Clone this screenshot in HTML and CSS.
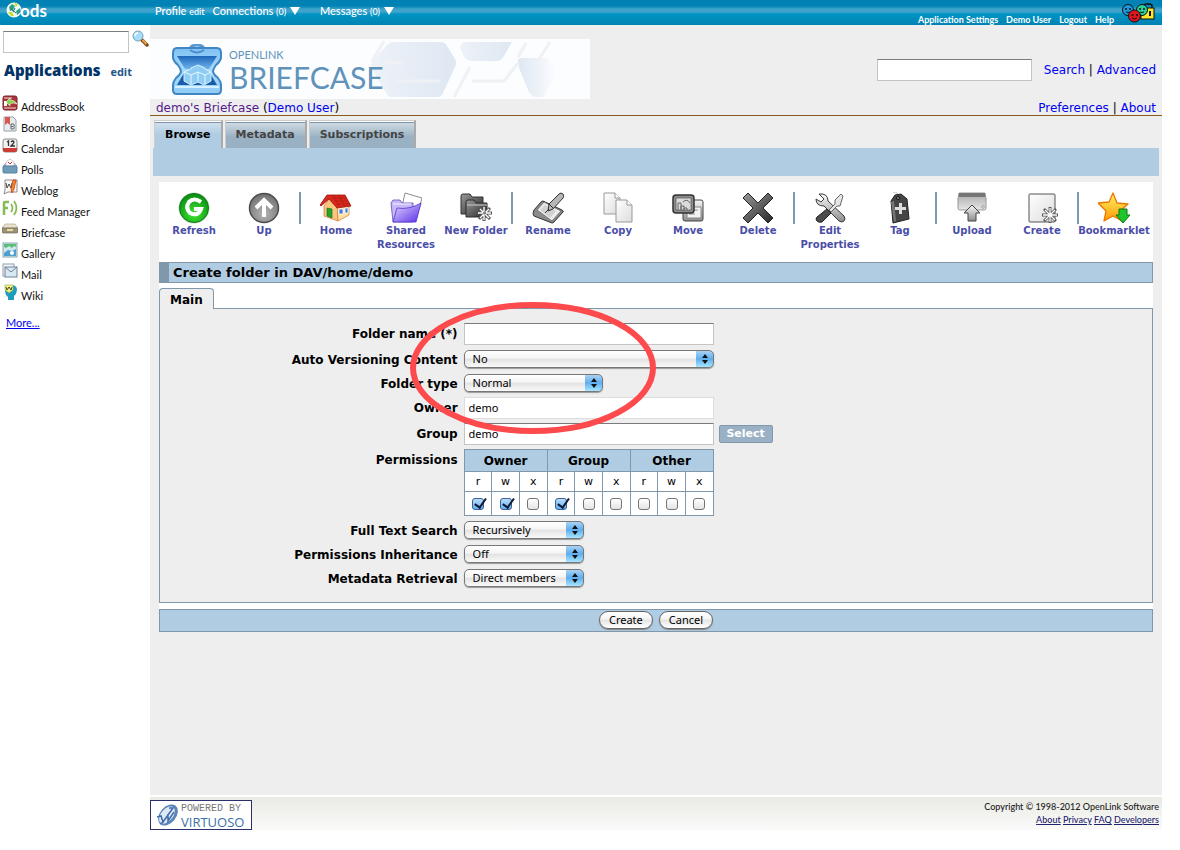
FILE: index.html
```html
<!DOCTYPE html>
<html lang="en">
<head>
    <meta charset="UTF-8">
    <meta name="viewport" content="width=device-width, initial-scale=1.0">
    <title>ODS Briefcase</title>
    <link rel="stylesheet" href="styles.css">
</head>
<body>
    <!-- shared gradients for the icons -->
    <svg class="defs" width="0" height="0" aria-hidden="true">
        <defs>
            <linearGradient id="gray" x1="0" y1="0" x2="0" y2="1"><stop offset="0" stop-color="#f8f8f8"/><stop offset="1" stop-color="#8d8d8d"/></linearGradient>
            <linearGradient id="drive" x1="0" y1="0" x2="0" y2="1"><stop offset="0" stop-color="#a8a8a8"/><stop offset="1" stop-color="#e6e6e6"/></linearGradient>
            <linearGradient id="dark" x1="0" y1="0" x2="1" y2="1"><stop offset="0" stop-color="#9a9a9a"/><stop offset="1" stop-color="#262626"/></linearGradient>
            <linearGradient id="paper" x1="0" y1="0" x2="1" y2="1"><stop offset="0" stop-color="#ffffff"/><stop offset="1" stop-color="#dcdcdc"/></linearGradient>
            <radialGradient id="green" cx="0.5" cy="0.7" r="0.7"><stop offset="0" stop-color="#3fe62f"/><stop offset="1" stop-color="#088a12"/></radialGradient>
            <radialGradient id="up" cx="0.5" cy="0.7" r="0.7"><stop offset="0" stop-color="#b4b4b4"/><stop offset="1" stop-color="#707070"/></radialGradient>
            <linearGradient id="violet" x1="0" y1="0" x2="1" y2="1"><stop offset="0" stop-color="#e6dcff"/><stop offset="1" stop-color="#5a2ee6"/></linearGradient>
            <linearGradient id="gold" x1="0" y1="0" x2="0" y2="1"><stop offset="0" stop-color="#fff36a"/><stop offset="1" stop-color="#ff9a00"/></linearGradient>
            <linearGradient id="case" x1="0" y1="0" x2="0" y2="1"><stop offset="0" stop-color="#7fc0f3"/><stop offset="0.5" stop-color="#a9dcfb"/><stop offset="1" stop-color="#8fcbf6"/></linearGradient>
            <linearGradient id="inside" x1="0" y1="0" x2="0" y2="1"><stop offset="0" stop-color="#1d66b8"/><stop offset="1" stop-color="#6fb4ee"/></linearGradient>
            <linearGradient id="cell" x1="0" y1="0" x2="1" y2="0"><stop offset="0" stop-color="#eef2f8"/><stop offset="1" stop-color="#dee7f2"/></linearGradient>
            <linearGradient id="cellfade" x1="0" y1="0" x2="1" y2="0"><stop offset="0" stop-color="#dee7f2"/><stop offset="1" stop-color="#fcfdfe"/></linearGradient>
        </defs>
    </svg>

    <header class="topbar">
        <a href="#" class="ods" aria-label="ods">
            <svg width="16" height="18" viewBox="0 0 16 18">
                <circle cx="8" cy="8" r="7.500" fill="#f2faf4"/>
                <path d="M3 5l3-3 3 2-2 4-3 1zM10 9l4-3 1 4-4 3z" fill="#2f9f8c"/>
                <path d="M8 1l4 1-2 3zM2 10l4 0 2 4-3 0z" fill="#c6dc28"/>
                <path d="M5 7l5 4M9 6l-2 4" stroke="#146c7c" stroke-width="1"/>
            </svg>
            <span>ods</span>
        </a>
        <nav class="menu">
            <span><a href="#">Profile</a> <a href="#" class="small">edit</a></span>
            <a href="#">Connections <span class="small">(0)</span> <i class="down"></i></a>
            <a href="#" class="messages">Messages <span class="small">(0)</span> <i class="down"></i></a>
        </nav>
        <nav class="account">
            <a href="#">Application Settings</a>
            <a href="#">Demo User</a>
            <a href="#">Logout</a>
            <a href="#">Help</a>
        </nav>
        <svg class="faces" width="33" height="20" viewBox="0 0 33 20">
            <path d="M22 8V3q0-2 3-2h2q3 0 3 2v5" fill="none" stroke="#111" stroke-width="1.500"/>
            <rect x="19" y="5" width="13" height="11" fill="#ffe62b" stroke="#111"/>
            <path d="M28 8v5" stroke="#111" stroke-width="2"/>
            <circle cx="6" cy="7" r="5.500" fill="#1b9ade" stroke="#111"/>
            <circle cx="20" cy="7" r="5.500" fill="#27d39c" stroke="#111"/>
            <circle cx="12.500" cy="13" r="6" fill="#e0161c" stroke="#111"/>
            <path d="M3 6h2M7 6h2M17 6h2M21 6h2M9.500 12h2M14 12h2" stroke="#111" stroke-width="1.500"/>
            <path d="M4 9q2 1 4 0M18 9q2 1 4 0M10 15q2.500 2 5 0" fill="none" stroke="#111"/>
        </svg>
    </header>

    <div class="page">
        <aside class="sidebar">
            <form class="find">
                <input type="text" class="field" aria-label="Search">
                <button type="button" aria-label="Find">
                    <svg width="17" height="17" viewBox="0 0 17 17">
                        <path d="M10 10l5 5" stroke="#7a4a1e" stroke-width="3.500" stroke-linecap="round"/>
                        <path d="M10.500 10l4 4" stroke="#f2a540" stroke-width="2"/>
                        <circle cx="6" cy="6" r="5" fill="#a5ddfa" stroke="#7c9cb8"/>
                        <path d="M3 6q0-3 3-3" fill="none" stroke="#fff" stroke-width="1.500"/>
                    </svg>
                </button>
            </form>
            <h2>Applications <a href="#">edit</a></h2>
            <ul class="apps">
                <li><a href="#"><svg width="16" height="16" viewBox="0 0 16 16"><rect x="1" y="1" width="14" height="14" rx="2" fill="#a8343a" stroke="#7b2227"/><path d="M2 3h8M2 13h12" stroke="#f0dcdc"/><rect x="2" y="6" width="3" height="5" fill="#fff"/><path d="M4 7l4-4v2q5 0 7 4-4-2-7 0v2z" fill="#8bd24c" stroke="#f2ffe8" stroke-width=".6"/></svg>AddressBook</a></li>
                <li><a href="#"><svg width="16" height="16" viewBox="0 0 16 16"><path d="M2 1h9l3 3v11H2z" fill="#e8ecef" stroke="#97a2ab"/><path d="M3 1h5v8L5.500 7 3 9z" fill="#d8594f"/><path d="M9 8v5h2q2 0 1-2.500 1-2.500-1-2.500zM9 10.500h2" fill="none" stroke="#5b6670"/></svg>Bookmarks</a></li>
                <li><a href="#"><svg width="16" height="16" viewBox="0 0 16 16"><rect x="1" y="2" width="14" height="13" rx="2" fill="#f1f1f1" stroke="#8b8b8b"/><path d="M1 11h14v2q0 2-2 2H3q-2 0-2-2z" fill="#cf3b35"/><path d="M5 5l1.500-1v5M9 5q2-2 3 0 0 1-3 4h4" fill="none" stroke="#333" stroke-width="1.300"/></svg>Calendar</a></li>
                <li><a href="#"><svg width="16" height="16" viewBox="0 0 16 16"><path d="M1 8l3-3h8l3 3z" fill="#b9cfdd" stroke="#7292a6" stroke-width=".6"/><path d="M4 8V4l4-3 4 3v4z" fill="#fff" stroke="#b9a0a5" stroke-width=".6"/><path d="M6 4l2 2 2-2" fill="none" stroke="#d6304f"/><rect x="1" y="8" width="14" height="7" rx="1" fill="#6f9cb8" stroke="#5481a0"/></svg>Polls</a></li>
                <li><a href="#"><svg width="16" height="16" viewBox="0 0 16 16"><path d="M3 1h12v12H6l-4 2 1-4z" fill="#f8f8f8" stroke="#8c8c8c"/><path d="M4 4l1 5 2-4 2 4 1-5" fill="none" stroke="#444"/><path d="M14 1l-2 9-2 4-1-4 2-9z" fill="#f08b22" stroke="#cf3b1c" stroke-width=".8"/></svg>Weblog</a></li>
                <li><a href="#"><svg width="16" height="16" viewBox="0 0 16 16"><path d="M2 15V3q0-1 1-1h4M2 8h4" fill="none" stroke="#84bd57" stroke-width="2.500"/><path d="M9 4q3 4 0 8M12 1q5 7 0 14" fill="none" stroke="#84bd57" stroke-width="1.800"/></svg>Feed Manager</a></li>
                <li><a href="#"><svg width="16" height="16" viewBox="0 0 16 16"><path d="M3 3h10l3 4H0z" fill="#e9e3cd" stroke="#b3aa8c" stroke-width=".7"/><path d="M0 7h16v4l-1 1H1l-1-1z" fill="#9c9478" stroke="#6d6650" stroke-width=".7"/><path d="M5 8h6v2H5z" fill="#e8dca0"/></svg>Briefcase</a></li>
                <li><a href="#"><svg width="16" height="16" viewBox="0 0 16 16"><rect x="1" y="1" width="14" height="14" fill="#cfe8ee" stroke="#8aaab3"/><path d="M2 2h12v3l-2-1-2 2-3-2-3 2-2-1z" fill="#5bbd76"/><path d="M2 11l4-3 4 1 4-2v7H2z" fill="#4c9fd0"/><circle cx="10" cy="11" r="2" fill="#fff"/></svg>Gallery</a></li>
                <li><a href="#"><svg width="16" height="16" viewBox="0 0 16 16"><rect x="1" y="1" width="11" height="12" fill="#f4f6f8" stroke="#8e9dad"/><rect x="3" y="4" width="12" height="10" fill="#d9e8f5" stroke="#6f8298"/><path d="M3 4l6 5 6-5" fill="none" stroke="#6f8298"/></svg>Mail</a></li>
                <li><a href="#"><svg width="16" height="16" viewBox="0 0 16 16"><path d="M3 6q0-5 6-5t6 5l-1 4-2 2v4H6v-3q-3-2-3-7z" fill="#1b9cc0"/><path d="M3 1h8v5l-4 3-4-3z" fill="#eef08a" stroke="#9faa33" stroke-width=".6"/><path d="M4 3l1 3 2-3 2 3 1-3" fill="none" stroke="#3d4d1c"/></svg>Wiki</a></li>
            </ul>
            <a href="#" class="more">More...</a>
        </aside>

        <div class="content">
            <main>
                <div class="banner">
                    <div class="brand">
                        <svg class="hex" width="230" height="60" viewBox="0 0 230 60" aria-hidden="true">
                            <path d="M34 3h46q5 0 7 4l8 13q2 4 0 8L83 54q-2 4-6 4H32q-4 0-6-4L12 30q-2-4 0-8L26 7q3-4 8-4z" fill="url(#cell)"/>
                            <path d="M100 8q2-5 6-5h46l-8 14q-3 5-8 5h-24q-5 0-8-4z" fill="url(#cell)"/>
                            <path d="M158 22q0-3 3-3h26l10 12-10 20-4 7h-6q-5 0-8-5l-10-24z" fill="url(#cellfade)"/>
                            <path d="M12 22l12-20M36 42h44M24 24h20M112 42h32l14-18M110 28l-16 30M190 3l-14 22M158 18l8-14" fill="none" stroke="#eff1f4" stroke-width="3"/>
                        </svg>
                        <svg class="case" width="50" height="51" viewBox="0 0 50 51" aria-hidden="true">
                            <path d="M18 5q1-4 7-4t7 4" fill="none" stroke="#5b99cf" stroke-width="3"/>
                            <path d="M5 4h40q4 0 4 5v5q-1 4-5 7-3 4-3 7 1 3 5 6 3 4 3 7v5q0 4-4 4H5q-4 0-4-4v-5q0-3 3-7 4-3 5-6 0-3-3-7-4-3-5-7V9q0-5 4-5z" fill="url(#case)" stroke="#3f86c5" stroke-width="2"/>
                            <path d="M18 6q7 5 14 0" fill="none" stroke="#4a8fcb" stroke-width="2"/>
                            <path d="M5 12h40l-8 13H13z" fill="url(#inside)"/>
                            <path d="M12 29h26l7 12H5z" fill="#1b5ca8"/>
                            <path d="M12 28l7-3 0-1 7-3 7 3v1l6 3v9l-7 4-6-3-7 3-7-4z" fill="#8fcdf5" stroke="#d9f1ff" stroke-width="1"/>
                            <path d="M12 28l7 3 7-3 7 3 6-3M19 31v9M26 28v9M33 31v9" fill="none" stroke="#e6f7ff"/>
                            <path d="M3 43h44" stroke="#d5f0ff" stroke-width="2"/>
                        </svg>
                        <div class="brand-name">
                            <span class="openlink">OPENLINK</span>
                            <span class="briefcase">BRIEFCASE</span>
                        </div>
                    </div>
                    <form class="search">
                        <input type="text" class="field" aria-label="Search briefcase">
                        <span><a href="#">Search</a> | <a href="#">Advanced</a></span>
                    </form>
                </div>
                <div class="crumbs">
                    <span><a href="#" class="visited">demo's Briefcase</a> (<a href="#">Demo User</a>)</span>
                    <span><a href="#">Preferences</a> | <a href="#">About</a></span>
                </div>

                <nav class="tabs">
                    <a href="#" class="active">Browse</a>
                    <a href="#">Metadata</a>
                    <a href="#">Subscriptions</a>
                </nav>
                <div class="strip"></div>

                <div class="sheet">
                    <nav class="toolbar">
                        <a href="#"><svg width="32" height="32" viewBox="0 0 32 32"><circle cx="16" cy="16" r="15.500" fill="#c9d6c9"/><circle cx="16" cy="16" r="14.500" fill="url(#green)" stroke="#0a7a16"/><path d="M23 10q-7-5-12 0-4 6 1 11 8 4 11-4h-7" fill="none" stroke="#fff" stroke-width="4"/></svg>Refresh</a>
                        <a href="#"><svg width="32" height="32" viewBox="0 0 32 32"><circle cx="16" cy="16" r="14.500" fill="url(#up)" stroke="#4c4c4c" stroke-width="1.500"/><path d="M16 25V8M8 16l8-8 8 8" fill="none" stroke="#fff" stroke-width="4"/></svg>Up</a>
                        <i class="sep"></i>
                        <a href="#"><svg width="32" height="32" viewBox="0 0 32 32"><path d="M4 14l6-8 8 9v14L4 24z" fill="#fbc57f" stroke="#c87a33" stroke-width=".7"/><path d="M17 14h12v9l-11 6z" fill="#ffdfa2" stroke="#c87a33" stroke-width=".7"/><path d="M7 3h18l6 11-14 2-8-9-8 7-1-1z" fill="#d8271c" stroke="#951610" stroke-width=".8"/><path d="M12 6h14M14 9h14M16 12h14M13 3l7 12M19 3l6 12" stroke="#a81a12" stroke-width=".6"/><path d="M7 16l5 1v9l-5-2z" fill="#22a52c" stroke="#126a18" stroke-width=".6"/><path d="M19 17h4v5h-4zM25 16h3v5h-3z" fill="#3c7be0" stroke="#fff" stroke-width=".8"/></svg>Home</a>
                        <a href="#"><svg width="32" height="32" viewBox="0 0 32 32"><path d="M15 1l17 5-5 18-16-5z" fill="#fff" stroke="#8d8d8d"/><path d="M1 11l2-3h7l2 3h11v19H3z" fill="#c9b8f8" stroke="#5f4ac0" stroke-width=".8"/><path d="M7 16q12 2 24-5l-5 19H3z" fill="url(#violet)" stroke="#5032cf" stroke-width=".8"/><path d="M3 12h18" stroke="#f4f0ff"/></svg>Shared<br>Resources</a>
                        <a href="#"><svg width="32" height="32" viewBox="0 0 32 32"><path d="M1 4q0-2 2-2h7l2 3h11v17H1z" fill="url(#dark)" stroke="#333"/><path d="M6 10q0-2 2-2h6l2 3h11v14H6z" fill="url(#dark)" stroke="#2d2d2d"/><path d="M7 13h20" stroke="#c9c9c9"/><path d="M24 14v15M17 21h15M19 16l11 11M30 16L19 27" stroke="#555" stroke-width="3"/><path d="M24 15v13M18 21h13M20 17l9 9M29 17l-9 9" stroke="#fff" stroke-width="1.400"/><circle cx="24.500" cy="21" r="1.500" fill="#777"/></svg>New Folder</a>
                        <i class="sep"></i>
                        <a href="#"><svg width="32" height="32" viewBox="0 0 32 32"><path d="M2 18l7-8q1-1 2-1l19 9q2 1 1 2l-9 10q-1 1-2 1L2 24q-2-2 0-6z" fill="#8b8b8b" stroke="#333"/><path d="M5 18l7-8 17 9-9 10z" fill="#ececec" stroke="#666" stroke-width=".8"/><path d="M8 18l5-5 11 6-6 7z" fill="#d2d2d2"/><path d="M16 19l1-7L27 2q2-2 4 0t0 4L21 17z" fill="#b6b6b6" stroke="#333"/><path d="M17 12l4 4M13 21l4-4" stroke="#333"/></svg>Rename</a>
                        <a href="#"><svg width="32" height="32" viewBox="0 0 32 32"><path d="M2 1h11l5 5v16H2z" fill="url(#paper)" stroke="#999"/><path d="M13 1v5h5" fill="#fff" stroke="#999"/><path d="M14 8h11l5 5v17H14z" fill="url(#paper)" stroke="#999"/><path d="M25 8v5h5" fill="#fff" stroke="#999"/></svg>Copy</a>
                        <a href="#"><svg width="32" height="32" viewBox="0 0 32 32"><rect x="11" y="8" width="20" height="21" rx="2" fill="url(#gray)" stroke="#444"/><path d="M15 15h14v11H15z" fill="#f3f3f3" stroke="#888"/><path d="M17 18h9M17 22h6" stroke="#888"/><rect x="1" y="3" width="21" height="18" rx="3" fill="#8d8d8d" stroke="#333" stroke-width="1.500"/><rect x="4" y="6" width="15" height="12" fill="#dadada" stroke="#555" stroke-width=".7"/><path d="M6 18v-7h3v7M9 18v-4h3v4M12 18v-2h3v2M11 10q4-4 7 1" fill="none" stroke="#666"/></svg>Move</a>
                        <a href="#"><svg width="32" height="32" viewBox="0 0 32 32"><path d="M6 1l10 10L26 1l5 5-10 10 10 10-5 5-10-10L6 31l-5-5 10-10L1 6z" fill="url(#dark)" stroke="#222"/></svg>Delete</a>
                        <i class="sep"></i>
                        <a href="#"><svg width="32" height="32" viewBox="0 0 32 32"><path d="M5 2l5 5-3 3-5-3q0 7 8 7l15 15q3 2 5 0t0-5L14 9q0-8-9-7z" fill="url(#gray)" stroke="#3a3a3a"/><path d="M29 4l-2-2-6 6v4l-6 6 2 2 6-6h3z" fill="#e6e6e6" stroke="#444" stroke-width=".8"/><path d="M13 17l4 4-9 9q-3 1-5-1t0-4z" fill="#4d4d4d" stroke="#222"/></svg>Edit<br>Properties</a>
                        <a href="#"><svg width="32" height="32" viewBox="0 0 32 32"><path d="M9 0q6 0 5 5" fill="none" stroke="#bbb"/><path d="M7 9l4-6 6-1 6 5 2 20-16 4z" fill="#454545" stroke="#222"/><path d="M7 10l3 20 2-1-2-20z" fill="#777"/><circle cx="14" cy="6" r="1.500" fill="#999" stroke="#111"/><path d="M16.500 11v11M11 16.500h11" stroke="#ddd" stroke-width="3"/></svg>Tag</a>
                        <i class="sep"></i>
                        <a href="#"><svg width="32" height="32" viewBox="0 0 32 32"><path d="M3 1h26l1 5v10q0 2-2 2H4q-2 0-2-2V6z" fill="url(#drive)" stroke="#999"/><path d="M3 1h26v4H3z" fill="#767676"/><circle cx="27" cy="15" r="1.300" fill="#eee" stroke="#777" stroke-width=".6"/><path d="M16 13l8 8h-4v8h-8v-8H8z" fill="url(#gray)" stroke="#444"/></svg>Upload</a>
                        <a href="#"><svg width="32" height="32" viewBox="0 0 32 32"><rect x="3" y="2" width="26" height="28" rx="1" fill="url(#paper)" stroke="#555"/><path d="M24 15v16M16 23h16M18 17l12 12M30 17L18 29" stroke="#555" stroke-width="2.800"/><path d="M24 16v14M17 23h14M19 18l10 10M29 18L19 28" stroke="#fff" stroke-width="1.300"/></svg>Create</a>
                        <i class="sep"></i>
                        <a href="#"><svg width="32" height="32" viewBox="0 0 32 32"><path d="M15 1l4 10 11 1-8 7 2 10-9-5-9 5 2-10-8-8 11-1z" fill="url(#gold)" stroke="#e87800" stroke-width="1.300" stroke-linejoin="round"/><path d="M21 17h8v6h3l-7 8-7-8h3z" fill="#1fc52a" stroke="#08790f"/></svg>Bookmarklet</a>
                    </nav>

                    <h1>Create folder in DAV/home/demo</h1>

                    <div class="form-tabs"><a href="#">Main</a></div>
                    <form class="props" id="props">
                        <label for="name">Folder name (*)</label>
                        <div><input type="text" id="name" class="field"></div>

                        <label for="versioning">Auto Versioning Content</label>
                        <div><select id="versioning" class="wide"><option>No</option><option>Yes</option></select></div>

                        <label for="type">Folder type</label>
                        <div><select id="type" class="medium"><option>Normal</option></select></div>

                        <label for="owner">Owner</label>
                        <div><input type="text" id="owner" class="field readonly" value="demo" readonly></div>

                        <label for="group">Group</label>
                        <div><input type="text" id="group" class="field" value="demo"><button type="button" class="select">Select</button></div>

                        <span class="label">Permissions</span>
                        <div>
                            <table class="perms">
                                <thead>
                                    <tr><th colspan="3">Owner</th><th colspan="3">Group</th><th colspan="3">Other</th></tr>
                                </thead>
                                <tbody>
                                    <tr class="rwx"><td>r</td><td>w</td><td>x</td><td>r</td><td>w</td><td>x</td><td>r</td><td>w</td><td>x</td></tr>
                                    <tr class="boxes">
                                        <td><input type="checkbox" aria-label="Owner r" checked></td>
                                        <td><input type="checkbox" aria-label="Owner w" checked></td>
                                        <td><input type="checkbox" aria-label="Owner x"></td>
                                        <td><input type="checkbox" aria-label="Group r" checked></td>
                                        <td><input type="checkbox" aria-label="Group w"></td>
                                        <td><input type="checkbox" aria-label="Group x"></td>
                                        <td><input type="checkbox" aria-label="Other r"></td>
                                        <td><input type="checkbox" aria-label="Other w"></td>
                                        <td><input type="checkbox" aria-label="Other x"></td>
                                    </tr>
                                </tbody>
                            </table>
                        </div>

                        <label for="fulltext">Full Text Search</label>
                        <div><select id="fulltext"><option>Recursively</option></select></div>

                        <label for="inherit">Permissions Inheritance</label>
                        <div><select id="inherit"><option>Off</option></select></div>

                        <label for="metadata">Metadata Retrieval</label>
                        <div><select id="metadata"><option>Direct members</option></select></div>

                        <svg class="marker" width="246" height="132" viewBox="0 0 246 132" aria-hidden="true"><ellipse cx="123" cy="66" rx="120" ry="63" fill="none" stroke="#fd4a4d" stroke-width="6"/></svg>
                    </form>
                    <div class="actions">
                        <button type="submit" form="props">Create</button>
                        <button type="button">Cancel</button>
                    </div>
                </div>
            </main>

            <footer>
                <a href="#" class="virtuoso">
                    <svg width="24" height="24" viewBox="0 0 24 24" aria-hidden="true">
                        <ellipse cx="13" cy="12" rx="12" ry="8" transform="rotate(-50 13 12)" fill="#5c84b8"/>
                        <ellipse cx="12" cy="12" rx="10" ry="6" transform="rotate(-50 12 12)" fill="#dfe9f5"/>
                        <path d="M2 14l4-1 2 6 10-14-4 0M8 19l-3 2M13 11l0 7 6-9" fill="none" stroke="#3f6dab" stroke-width="1.500"/>
                    </svg>
                    <span class="virtuoso-text"><small>POWERED BY</small><b>VIRTUOSO</b></span>
                </a>
                <div class="legal">
                    Copyright © 1998-2012 OpenLink Software<br>
                    <a href="#">About</a> <a href="#">Privacy</a> <a href="#">FAQ</a> <a href="#">Developers</a>
                </div>
            </footer>
        </div>
    </div>
</body>
</html>
```
FILE: styles.css
```css
* {
    box-sizing: border-box;
}
body {
    margin: 0;
    padding-right: 18px;
    min-height: 100vh;
    display: flex;
    flex-direction: column;
    background-color: #fff;
    font-family: Verdana, "DejaVu Sans", sans-serif;
    font-size: 12px;
    color: #000;
}
a {
    color: #0000ee;
    text-decoration: none;
}
svg {
    display: block;
    flex: none;
}
button {
    cursor: pointer;
}
.defs {
    position: absolute;
}

/* top bar */
.topbar {
    display: flex;
    height: 25px;
    padding: 0 7px 0 6px;
    background: linear-gradient(#0083b4 0, #0083b4 6px, #3fa3cc 9px, #3fa3cc 12px, #0094c4 14px, #0083b4 25px);
    font-family: "Gill Sans", Lato, sans-serif;
    font-size: 11px;
    font-weight: 500;
    line-height: 22px;
}
.topbar a {
    color: #fff;
}
.ods {
    display: flex;
    width: 149px;
    padding-top: 2px;
    font-size: 17px;
    font-weight: bold;
    line-height: 17px;
}
.ods span {
    margin-left: -2px;
}
.menu {
    display: flex;
    gap: 8px;
}
.menu .messages {
    margin-left: 12px;
}
.menu .small {
    font-size: 9px;
}
.down {
    display: inline-block;
    margin-left: 1px;
    border: 5px solid transparent;
    border-top: 8px solid #fff;
    border-bottom: 0;
}
.account {
    display: flex;
    gap: 8px;
    margin-left: auto;
    padding-top: 9px;
    font-size: 9px;
    font-weight: bold;
}
.faces {
    margin: 3px 0 0 8px;
}

/* left column */
.page {
    display: flex;
    flex: 1;
    padding-bottom: 20px;
}
.sidebar {
    flex: none;
    width: 150px;
    padding: 6px 0 0 2px;
    font-family: "Gill Sans", Lato, sans-serif;
    font-size: 11px;
}
.field {
    width: 250px;
    height: 22px;
    padding: 0 4px 2px;
    border: 1px solid #c4c4c4;
    border-top-color: #7b7b7b;
    background-color: #fff;
    font-family: "Lucida Grande", "Noto Sans", sans-serif;
    font-size: 11px;
}
.find {
    display: flex;
    gap: 3px;
    padding-left: 1px;
}
.find .field {
    width: 126px;
}
.find button {
    height: 17px;
    margin-top: -1px;
    padding: 0;
    border: 0;
    background: none;
}
.sidebar h2 {
    margin: 6px 0 12px;
    padding-left: 2px;
    font-family: "Open Sans", sans-serif;
    font-size: 15px;
    font-weight: 800;
    line-height: 22px;
    color: #003366;
}
.sidebar h2 a {
    margin-left: 6px;
    font-size: 11px;
    font-weight: bold;
    color: #26588a;
}
.apps {
    list-style-type: none;
    margin: 0;
    padding: 0;
}
.apps a {
    display: flex;
    gap: 3px;
    height: 21px;
    line-height: 24px;
    color: #111;
}
.more {
    display: inline-block;
    margin: 10px 4px;
    line-height: 16px;
    text-decoration: underline;
}

/* main column */
.content {
    display: flex;
    flex: 1;
    flex-direction: column;
    min-width: 0;
}
main {
    flex: 1;
    padding-top: 14px;
    background-color: #eee;
}
.banner {
    display: flex;
    justify-content: space-between;
    padding-right: 6px;
}
.brand {
    display: flex;
    position: relative;
    gap: 7px;
    width: 440px;
    height: 60px;
    padding: 5px 0 0 22px;
    background-color: #fcfdfe;
}
.hex {
    position: absolute;
    top: 0;
    right: 0;
}
.brand-name {
    position: relative;
    display: flex;
    flex-direction: column;
    color: #5f93bb;
    font-family: Lato, sans-serif;
}
.openlink {
    font-size: 11px;
    line-height: 12px;
    padding-top: 5px;
}
.briefcase {
    font-size: 30px;
    line-height: 32px;
}
.search {
    display: flex;
    gap: 12px;
    padding-top: 20px;
    line-height: 22px;
}
.search .field {
    width: 155px;
}
.crumbs {
    display: flex;
    justify-content: space-between;
    height: 17px;
    padding: 0 6px;
    border-bottom: 1px solid #8a5a1c;
    line-height: 18px;
}
.crumbs .visited {
    color: #551a8b;
}

.tabs {
    display: flex;
    gap: 2px;
    padding: 4px 4px 0;
}
.tabs a {
    height: 28px;
    padding: 0 10px;
    border: 1px solid #ccc;
    border-right: 2px solid #aaa;
    border-bottom: 0;
    background: linear-gradient(#d5dfe7, #9ab1c3 60%);
    box-shadow: inset 0 1px #fff, inset 0 2px #7f94a8;
    color: #444;
    font-size: 11px;
    font-weight: bold;
    line-height: 27px;
}
.tabs .active {
    background: linear-gradient(#d3e2ee, #b0cce2 50%);
    color: #000;
}
.strip {
    height: 28px;
    margin: 0 3px;
    background-color: #b0cce2;
}

.sheet {
    margin: 6px 9px 0;
    background-color: #fff;
}
.toolbar {
    display: flex;
    padding: 10px 0;
    min-height: 80px;
}
.toolbar a {
    display: flex;
    flex: none;
    flex-direction: column;
    align-items: center;
    width: 70px;
    color: #4a4ea8;
    font-size: 10px;
    font-weight: bold;
    line-height: 14px;
    text-align: center;
    white-space: nowrap;
}
.toolbar .sep {
    width: 2px;
    height: 32px;
    background-color: #7f98ac;
}
.sheet h1 {
    margin: 0;
    padding-left: 4px;
    border: 1px solid #7f98ac;
    border-left-width: 10px;
    background-color: #b0cce2;
    font-size: 13px;
    line-height: 19px;
}
.form-tabs {
    display: flex;
    padding-top: 5px;
}
.form-tabs a {
    position: relative;
    z-index: 1;
    height: 21px;
    margin-bottom: -1px;
    padding: 0 10px;
    border: 1px solid #7f98ac;
    border-bottom: 0;
    border-radius: 4px 4px 0 0;
    background-color: #eee;
    color: #000;
    font-weight: bold;
    line-height: 22px;
}
.props {
    display: grid;
    position: relative;
    grid-template-columns: 30% 1fr;
    grid-auto-rows: minmax(20px, auto);
    gap: 4px 6px;
    padding: 14px 0;
    border: 1px solid #7f98ac;
    background-color: #eee;
}
.props label, .props .label {
    align-self: start;
    font-weight: bold;
    line-height: 22px;
    text-align: right;
}
.props label {
    height: 20px;
}
.props div {
    display: flex;
    align-items: center;
    gap: 5px;
}
.props .readonly {
    border-color: #ddd;
}
.props select {
    width: 120px;
    height: 18px;
    padding: 0 8px;
    appearance: none;
    border: 1px solid #777;
    border-radius: 5px;
    background:
        url("data:image/svg+xml,%3Csvg xmlns='http://www.w3.org/2000/svg' width='17' height='16'%3E%3Cpath d='M6 7l3-4 3 4zM6 9l3 4 3-4z' fill='%23111'/%3E%3C/svg%3E") right center no-repeat,
        linear-gradient(#a9d2f5, #5eaef0 50%, #a6e6ff) right / 17px 100% no-repeat,
        linear-gradient(#fff, #f4f4f4 45%, #e2e2e2 50%, #fafafa);
    box-shadow: 0 1px 1px #999;
    color: #000;
    font-family: "Lucida Grande", "Noto Sans", sans-serif;
    font-size: 11px;
    line-height: 16px;
}
.props .wide {
    width: 250px;
}
.props .medium {
    width: 139px;
}
.props .select {
    width: 54px;
    height: 18px;
    padding: 0;
    border: 1px solid #7f98ac;
    border-radius: 2px;
    background-color: #9ab1c5;
    color: #fff;
    font-family: inherit;
    font-size: 11px;
    font-weight: bold;
    line-height: 16px;
}
.perms {
    width: 250px;
    border-collapse: collapse;
    table-layout: fixed;
    background-color: #fff;
    text-align: center;
}
.perms th, .perms td {
    padding: 0;
    border: 1px solid #7f98ac;
}
.perms th {
    height: 22px;
    background-color: #b0cce2;
}
.perms td {
    height: 20px;
    font-size: 11px;
}
.perms .boxes td {
    height: 24px;
}
.perms input {
    display: block;
    position: relative;
    width: 12px;
    height: 12px;
    margin: 0 auto;
    appearance: none;
    border: 1px solid #777;
    border-radius: 3px;
    background: linear-gradient(#fff, #e4e4e4);
}
.perms input:checked {
    border-color: #3d5f9a;
    background: linear-gradient(#b9dcf8, #62b2f2);
}
.perms input:checked::after {
    content: "";
    position: absolute;
    top: -3px;
    left: 4px;
    width: 5px;
    height: 10px;
    border: solid #111b35;
    border-width: 0 2px 2px 0;
    transform: rotate(35deg);
}
.marker {
    position: absolute;
    top: -7px;
    left: 250px;
    pointer-events: none;
}
.actions {
    display: flex;
    justify-content: center;
    gap: 6px;
    margin-top: 6px;
    padding: 1px 0 2px;
    border: 1px solid #7f98ac;
    background-color: #b0cce2;
}
.actions button {
    height: 18px;
    padding: 0 9px;
    border: 1px solid #666;
    border-radius: 9px;
    background: linear-gradient(#fff, #f4f4f4 45%, #e4e4e4 50%, #fff);
    box-shadow: 0 1px 1px #888;
    font-family: "Lucida Grande", "Noto Sans", sans-serif;
    font-size: 11px;
    line-height: 16px;
}

footer {
    display: flex;
    justify-content: space-between;
    margin-top: 2px;
    padding: 3px 3px 0 0;
    background: linear-gradient(#eaeae4, #fafafa);
    font-family: "Gill Sans", Lato, sans-serif;
    font-size: 9px;
    font-weight: 500;
    line-height: 13px;
    color: #222;
}
.virtuoso {
    display: flex;
    gap: 2px;
    width: 102px;
    height: 30px;
    padding: 2px 4px;
    border: 1px solid #29306b;
    background-color: #fff;
}
.virtuoso-text {
    display: flex;
    flex-direction: column;
}
.virtuoso small {
    color: #777;
    font-family: "Liberation Mono", monospace;
    font-size: 10px;
    line-height: 11px;
}
.virtuoso b {
    color: #3d6fa8;
    font-family: "Open Sans", sans-serif;
    font-size: 13px;
    font-weight: 500;
    line-height: 16px;
}
.legal {
    text-align: right;
}
.legal a {
    color: #22226e;
    text-decoration: underline;
}
```
